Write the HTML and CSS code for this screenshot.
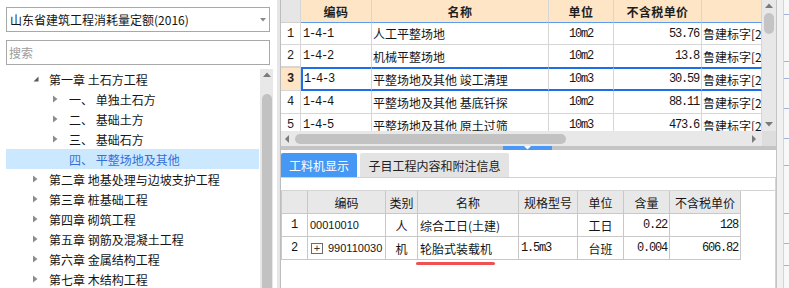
FILE: index.html
```html
<!DOCTYPE html>
<html lang="zh">
<head>
<meta charset="utf-8">
<title>定额</title>
<link rel="stylesheet" href="styles.css">
</head>
<body>
<div class="app">
  <div class="left">
    <div class="select">
      <span>山东省建筑工程消耗量定额(2016)</span>
      <svg class="dd" width="6" height="4" viewBox="0 0 6 4"><polygon points="0,0 6,0 3,3.5" fill="#8a8a8a"/></svg>
    </div>
    <div class="search">搜索</div>
    <div class="tree-wrap">
      <div class="tree">
        <div class="row ch"><span class="arr"><svg width="6" height="6" viewBox="0 0 6 6"><polygon points="5.5,0.5 5.5,5.5 0.5,5.5" fill="#595959"/></svg></span>第一章 土石方工程</div>
        <div class="row sub"><span class="arr"><svg width="5" height="8" viewBox="0 0 5 8"><polygon points="0,0.5 4.5,4 0,7.5" fill="#8c8c8c"/></svg></span>一、 单独土石方</div>
        <div class="row sub"><span class="arr"><svg width="5" height="8" viewBox="0 0 5 8"><polygon points="0,0.5 4.5,4 0,7.5" fill="#8c8c8c"/></svg></span>二、 基础土方</div>
        <div class="row sub"><span class="arr"><svg width="5" height="8" viewBox="0 0 5 8"><polygon points="0,0.5 4.5,4 0,7.5" fill="#8c8c8c"/></svg></span>三、 基础石方</div>
        <div class="row sub sel"><span class="arr"></span>四、 平整场地及其他</div>
        <div class="row ch"><span class="arr"><svg width="5" height="8" viewBox="0 0 5 8"><polygon points="0,0.5 4.5,4 0,7.5" fill="#8c8c8c"/></svg></span>第二章 地基处理与边坡支护工程</div>
        <div class="row ch"><span class="arr"><svg width="5" height="8" viewBox="0 0 5 8"><polygon points="0,0.5 4.5,4 0,7.5" fill="#8c8c8c"/></svg></span>第三章 桩基础工程</div>
        <div class="row ch"><span class="arr"><svg width="5" height="8" viewBox="0 0 5 8"><polygon points="0,0.5 4.5,4 0,7.5" fill="#8c8c8c"/></svg></span>第四章 砌筑工程</div>
        <div class="row ch"><span class="arr"><svg width="5" height="8" viewBox="0 0 5 8"><polygon points="0,0.5 4.5,4 0,7.5" fill="#8c8c8c"/></svg></span>第五章 钢筋及混凝土工程</div>
        <div class="row ch"><span class="arr"><svg width="5" height="8" viewBox="0 0 5 8"><polygon points="0,0.5 4.5,4 0,7.5" fill="#8c8c8c"/></svg></span>第六章 金属结构工程</div>
        <div class="row ch"><span class="arr"><svg width="5" height="8" viewBox="0 0 5 8"><polygon points="0,0.5 4.5,4 0,7.5" fill="#8c8c8c"/></svg></span>第七章 木结构工程</div>
      </div>
      <div class="lsb">
        <svg width="8" height="5" viewBox="0 0 8 5"><polygon points="0,5 8,5 4,0.5" fill="#7a7a7a"/></svg>
        <div class="lthumb"></div>
      </div>
    </div>
  </div>

  <div class="vsplit"></div>

  <div class="right">
    <div class="grid-main">
      <div class="grid-clip">
        <div class="tg-row hdr">
          <div class="rn"></div>
          <div>编码</div>
          <div>名称</div>
          <div>单位</div>
          <div>不含税单价</div>
          <div></div>
        </div>
        <div class="tg-row r1">
          <div class="rn">1</div>
          <div class="code">1-4-1</div>
          <div class="nm">人工平整场地</div>
          <div class="unit">10m2</div>
          <div class="num">53.76</div>
          <div class="doc">鲁建标字[2016]</div>
        </div>
        <div class="tg-row r2">
          <div class="rn">2</div>
          <div class="code">1-4-2</div>
          <div class="nm">机械平整场地</div>
          <div class="unit">10m2</div>
          <div class="num">13.8</div>
          <div class="doc">鲁建标字[2016]</div>
        </div>
        <div class="tg-row r3">
          <div class="rn">3</div>
          <div class="code">1-4-3</div>
          <div class="nm">平整场地及其他 竣工清理</div>
          <div class="unit">10m3</div>
          <div class="num">30.59</div>
          <div class="doc">鲁建标字[2016]</div>
        </div>
        <div class="tg-row r4">
          <div class="rn">4</div>
          <div class="code">1-4-4</div>
          <div class="nm">平整场地及其他 基底钎探</div>
          <div class="unit">10m2</div>
          <div class="num">88.11</div>
          <div class="doc">鲁建标字[2016]</div>
        </div>
        <div class="tg-row r5">
          <div class="rn">5</div>
          <div class="code">1-4-5</div>
          <div class="nm">平整场地及其他 原土过筛</div>
          <div class="unit">10m3</div>
          <div class="num">473.6</div>
          <div class="doc">鲁建标字[2016]</div>
        </div>
      </div>
      <div class="vsb">
        <svg width="8" height="5" viewBox="0 0 8 5"><polygon points="0,5 8,5 4,0.5" fill="#7a7a7a"/></svg>
        <div class="vthumb"></div>
        <svg class="vdown" width="8" height="5" viewBox="0 0 8 5"><polygon points="0,0 8,0 4,4.5" fill="#7a7a7a"/></svg>
      </div>
    </div>
    <div class="hsb-row">
      <div class="hsb">
        <svg width="4" height="8" viewBox="0 0 4 8"><polygon points="4,0 4,8 0,4" fill="#7a7a7a"/></svg>
        <div class="hthumb"></div>
        <svg class="hright" width="4" height="8" viewBox="0 0 4 8"><polygon points="0,0 0,8 4,4" fill="#7a7a7a"/></svg>
      </div>
      <div class="corner"></div>
    </div>
    <div class="hsplit">
      <div class="hsplit-btn"><svg width="7" height="4" viewBox="0 0 7 4"><polygon points="0,0 7,0 3.5,3.5" fill="#ffffff"/></svg></div>
    </div>

    <div class="bottom">
      <div class="tabs">
        <div class="tab active">工料机显示</div>
        <div class="tab tab2">子目工程内容和附注信息</div>
      </div>
      <div class="toolbar"></div>
      <div class="tbl-area">
        <div class="bt-row bhdr">
          <div></div>
          <div>编码</div>
          <div>类别</div>
          <div>名称</div>
          <div>规格型号</div>
          <div>单位</div>
          <div>含量</div>
          <div>不含税单价</div>
        </div>
        <div class="bt-row">
          <div class="brn">1</div>
          <div class="bcode">00010010</div>
          <div class="ctr">人</div>
          <div class="bname">综合工日(土建)</div>
          <div class="bspec"></div>
          <div class="ctr">工日</div>
          <div class="bnum">0.22</div>
          <div class="bnum">128</div>
        </div>
        <div class="bt-row">
          <div class="brn">2</div>
          <div class="bcode"><span class="plus">+</span>990110030</div>
          <div class="ctr">机</div>
          <div class="bname mk">轮胎式装载机<span class="mark"></span></div>
          <div class="bspec">1.5m3</div>
          <div class="ctr">台班</div>
          <div class="bnum">0.004</div>
          <div class="bnum">606.82</div>
        </div>
      </div>
    </div>
  </div>

  <div class="edge">
    <div class="edge-in">
      <div class="tick" style="height:15px"></div>
      <div class="tick" style="height:47px"></div>
      <div class="tick" style="height:17px"></div>
      <div class="tick" style="height:30px"></div>
      <div class="tick" style="height:30px"></div>
      <div class="tick" style="height:27px"></div>
      <div class="tick" style="height:48px"></div>
      <div class="tick" style="height:30px"></div>
      <div class="tick" style="height:22px"></div>
    </div>
  </div>
</div>
</body>
</html>
```

FILE: styles.css
```css
* { box-sizing: border-box; }
html, body { margin: 0; padding: 0; }
body {
  width: 789px;
  height: 288px;
  overflow: hidden;
  background: #ffffff;
  font-family: "Noto Sans CJK SC", "Noto Sans", sans-serif;
  font-size: 12px;
  color: #151515;
}
.app { display: flex; height: 288px; }

/* left panel */
.left { width: 277px; display: flex; flex-direction: column; padding-top: 7px; }
.select {
  margin: 0 7px 0 6px;
  height: 25px;
  border: 1px solid #a8a8a8;
  display: flex;
  align-items: center;
  justify-content: space-between;
  padding: 0 3px 0 3px;
  white-space: nowrap;
}
.search {
  margin: 8px 7px 0 6px;
  height: 25px;
  border: 1px solid #a8a8a8;
  display: flex;
  align-items: center;
  padding-left: 2px;
  color: #9c9c9c;
}
.tree-wrap { flex: 1; display: flex; margin-top: 4px; padding-left: 6px; min-height: 0; }
.tree { width: 253px; }
.row { height: 20px; display: flex; align-items: center; white-space: nowrap; }
.ch { padding-left: 27px; }
.sub { padding-left: 47px; }
.arr { width: 16px; display: flex; align-items: center; }
.sel { background: #cce8ff; color: #3470d6; }
.lsb {
  width: 13px;
  margin-left: 1px;
  background: #e8e8e8;
  display: flex;
  flex-direction: column;
  align-items: center;
  padding-top: 3px;
}
.lthumb { width: 10px; flex: 1; margin-top: 17px; background: #c2c2c2; border-radius: 5px 5px 0 0; }

.vsplit { width: 4px; background: #e6e6e6; border-right: 1px solid #bdbdbd; }

/* right panel */
.right { width: 495px; display: flex; flex-direction: column; }
.grid-main { height: 131px; display: flex; overflow: hidden; }
.grid-clip { width: 481px; overflow: hidden; }
.tg-row { display: grid; grid-template-columns: 20px 71px 177px 65px 88px 60px; height: 22px; }
.tg-row > div {
  border-right: 1px solid #d6d6d6;
  border-bottom: 1px solid #d6d6d6;
  display: flex;
  align-items: center;
  white-space: nowrap;
  overflow: hidden;
}
.tg-row.hdr { height: 23px; }
.hdr > div { background: #fde5c6; justify-content: center; font-weight: bold; letter-spacing: 0.4px; border-bottom-color: #5b9cf0; color: #1e1e1e; }
.hdr > .rn { background: #e6e6e6; border-bottom-color: #d0d0d0; }
.rn { justify-content: center; font-family: "Liberation Mono", monospace; font-size: 12px; color: #222; }
.code { padding-left: 2px; font-family: "Liberation Mono", monospace; letter-spacing: -1.2px; }
.nm { padding-left: 1px; }
.unit { justify-content: center; font-family: "Liberation Mono", monospace; letter-spacing: -1.2px; }
.num { justify-content: flex-end; padding-right: 2px; font-family: "Liberation Mono", monospace; letter-spacing: -1.2px; }
.doc { padding-left: 1px; }
.tg-row.r2 > div:not(.rn) { border-bottom: none; }
.tg-row.r3 { height: 24px; }
.r3 > div:not(.rn) { border-top: 2px solid #1c6fe8; border-bottom: 2px solid #1c6fe8; }
.r3 > .code { border-left: 2px solid #1c6fe8; padding-left: 1px; }
.r3 > .rn { background: #fde5c6; font-weight: bold; border-top: 1px solid #d6d6d6; }
.tg-row.r4 { height: 23px; }
.tg-row.r5 { height: 23px; }

.vsb {
  width: 14px;
  background: #e8e8e8;
  display: flex;
  flex-direction: column;
  align-items: center;
  padding-top: 3px;
}
.vthumb { width: 10px; height: 21px; margin-top: 5px; background: #c4c4c4; border-radius: 5px; }
.vdown { margin-top: auto; margin-bottom: 4px; }

.hsb-row { height: 15px; display: flex; }
.hsb { width: 481px; background: #e8e8e8; display: flex; align-items: center; padding: 0 6px 0 4px; }
.hthumb { width: 271px; height: 10px; margin-left: 6px; background: #c2c2c2; border-radius: 5px; }
.hright { margin-left: auto; }
.corner { width: 14px; background: #dddddd; }

.hsplit { height: 4px; background: #c4c4c4; display: flex; }
.hsplit-btn {
  width: 49px;
  margin-left: 222px;
  background: #4a98f4;
  display: flex;
  justify-content: center;
  align-items: flex-start;
}

.bottom { flex: 1; padding-top: 3px; display: flex; flex-direction: column; }
.tabs { display: flex; gap: 3px; height: 25px; border-bottom: 1px solid #d2d2d2; }
.tab {
  display: flex;
  align-items: center;
  justify-content: center;
  background: #e3e3e3;
  color: #222;
  border-radius: 2px 2px 0 0;
  width: 149px;
}
.tab.active { width: 76px; background: #4598f4; color: #ffffff; }
.toolbar { height: 13px; border-bottom: 1px solid #d4d4d4; border-right: 1px solid #d4d4d4; }
.tbl-area { flex: 1; border-right: 1px solid #d4d4d4; }
.bt-row { display: grid; grid-template-columns: 27px 78px 32px 101px 59px 46px 46px 71px; width: 460px; height: 23px; }
.bt-row > div {
  border-right: 1px solid #c8c8c8;
  border-bottom: 1px solid #c8c8c8;
  display: flex;
  align-items: center;
  white-space: nowrap;
}
.bt-row > div:first-child { border-left: 1px solid #c8c8c8; }
.bhdr > div { background: #e8e8e8; justify-content: center; }
.brn { justify-content: center; font-family: "Liberation Mono", monospace; }
.bcode { padding-left: 2px; font-family: "Liberation Sans", sans-serif; font-size: 11px; }
.plus {
  width: 12px;
  height: 11px;
  border: 1px solid #6a6a6a;
  display: inline-flex;
  align-items: center;
  justify-content: center;
  font-size: 11px;
  line-height: 1;
  margin: 0 5px 0 1px;
  color: #333;
}
.ctr { justify-content: center; }
.bname { padding-left: 2px; }
.mk { position: relative; }
.mark {
  position: absolute;
  left: -2px;
  top: 25px;
  width: 79px;
  height: 3px;
  border-radius: 2px;
  background: #f25050;
}
.bspec { padding-left: 2px; font-family: "Liberation Mono", monospace; letter-spacing: -1.2px; }
.bnum { justify-content: flex-end; padding-right: 2px; font-family: "Liberation Mono", monospace; letter-spacing: -1.2px; }

/* right edge */
.edge { width: 13px; background: #f1f1f1; border-left: 1px solid #c4c4c4; display: flex; justify-content: flex-end; }
.edge-in { width: 6px; border-left: 1px solid #d4d4d4; background: #f8f8f8; display: flex; flex-direction: column; }
.tick { border-bottom: 1px solid #9fb4da; flex: none; }
```
